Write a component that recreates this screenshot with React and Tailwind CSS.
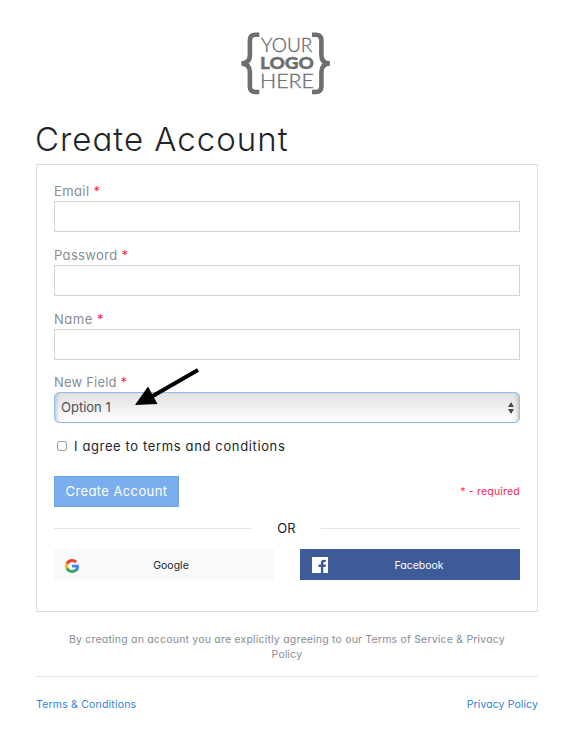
import React from 'react';

function Logo() {
  return (
    <svg className="mr-[2px] block h-[66px] w-[92px]" viewBox="240 31 92 66" fill="none">
      <g stroke="#6d6e71" strokeWidth="4.6">
        <path d="M259.3 34.7H255.5Q249.9 34.7 249.9 40.2V55Q249.9 63.2 241.5 63.5Q249.9 63.8 249.9 72V86.500Q249.9 92 255.5 92H259.3" />
        <path d="M312 34.700H315.800Q321.400 34.700 321.400 40.200V55Q321.400 63.200 329.800 63.500Q321.400 63.800 321.400 72V86.500Q321.400 92 315.800 92H312" />
      </g>
      <text fill="#6d6e71" stroke="#6d6e71" strokeWidth="0.35" fontFamily="Lato, sans-serif">
        <tspan x="261" y="52.200" fontSize="19.400" fontWeight="300" textLength="51.500" lengthAdjust="spacingAndGlyphs">YOUR</tspan>
        <tspan x="260" y="69" fontSize="17.800" fontWeight="900" textLength="54" lengthAdjust="spacingAndGlyphs">LOGO</tspan>
        <tspan x="260" y="88" fontSize="20" fontWeight="300" textLength="54" lengthAdjust="spacingAndGlyphs">HERE</tspan>
      </text>
    </svg>
  );
}

function Label({ children, spacing }) {
  return (
    <label className={`block h-[19px] text-[13px] leading-[19px] text-[#868e96] ${spacing}`}>
      {children} <span className="text-[#ff1f4f]">*</span>
    </label>
  );
}

function Field({ label, spacing }) {
  return (
    <div className="mb-[14px]">
      <Label spacing={spacing}>{label}</Label>
      <input className="block h-[31px] w-full border border-[#ced4da] bg-white px-2 outline-none" />
    </div>
  );
}

function GoogleIcon() {
  return (
    <svg className="h-[14px] w-[14px]" viewBox="2 2 44 44">
      <path fill="#EA4335" d="M24 11.500c3.500 0 6.700 1.200 9.200 3.600l6.900-6.900C35.900 4.200 30.400 2 24 2 15.400 2 8 6.900 4.400 14.100l8 6.200C14.300 15.200 18.700 11.500 24 11.500z" />
      <path fill="#4285F4" d="M46 24.500c0-1.600-.2-3.100-.4-4.500H24v9h12.400c-.6 2.900-2.200 5.300-4.700 7l7.700 6C43.900 37.900 46 31.800 46 24.500z" />
      <path fill="#FBBC05" d="M12.400 28.400A13.500 13.500 0 0 1 12.400 20.300l-8-6.200a22 22 0 0 0 0 20.500z" />
      <path fill="#34A853" d="M24 46c6 0 11.100-2 15.400-6l-7.700-6c-2.100 1.400-4.600 2.500-7.700 2.500-5.300 0-9.700-3.500-11.600-8.100l-8 6.200C8 41.500 15.400 46 24 46z" />
    </svg>
  );
}

function FacebookIcon() {
  return (
    <svg className="h-4 w-4" viewBox="0 0 16 16">
      <path fill="#fff" d="M0 0h16v16h-4.700V9.900h2.200l.3-2.300h-2.500V6.100c0-.7.3-1.100 1.200-1.100h1.400V2.900l-2-.1C10 2.800 8.900 4 8.900 5.800v1.800H6.500v2.300h2.400V16H0z" />
    </svg>
  );
}

export default function App() {
  return (
    <div className="flex h-[736px] w-[566px] flex-col overflow-hidden bg-white pl-9 pr-7 font-['Inter','Open_Sans',sans-serif] text-[#212529] [font-feature-settings:'cv11'_1]">
      <div className="flex h-[115px] shrink-0 justify-center pt-[31px]">
        <Logo />
      </div>
      <h1 className="-ml-px h-[49px] shrink-0 text-[33px] leading-[49px] font-[350] tracking-[1px] whitespace-nowrap">Create Account</h1>

      <div className="h-[448px] shrink-0 border border-[#dcdfe1] px-[17px] pt-[17px]">
        <Field label="Email" spacing="tracking-[0.4px]" />
        <Field label="Password" spacing="tracking-[0.35px]" />
        <Field label="Name" spacing="tracking-[0.5px]" />
        <div className="-mt-px">
          <Label spacing="tracking-[0.2px]">New Field</Label>
          <div className="relative flex h-[31px] items-center justify-between rounded-[5px] border border-[#8fbfec] bg-linear-to-b from-[#e2e2e2] to-white pl-[6px] pr-[5px] shadow-[inset_4px_0_4px_-3px_#b8b8b8,inset_-4px_0_4px_-3px_#b8b8b8]">
            <span className="text-[13px] tracking-[0px] text-[#495057]">Option 1</span>
            <svg className="h-3 w-[6px]" viewBox="0 0 6 12" fill="#444b51">
              <path d="M3 0l3 5H0zM3 12L0 7h6z" />
            </svg>
            <svg className="pointer-events-none absolute left-[78px] top-[-27px] h-[44px] w-[70px]" viewBox="133 366 70 44">
              <path d="M198 370L151 397" stroke="#000" strokeWidth="4" />
              <path d="M135 405L148 386.500L157.500 404z" fill="#000" />
            </svg>
          </div>
        </div>

        <label className="mt-[13px] flex h-5 items-center pl-[3px]">
          <span className="h-[10px] w-[10px] rounded-[2px] border border-[#a3a3a3] bg-white" />
          <span className="ml-[7px] whitespace-nowrap text-[13px] leading-5 tracking-[0.63px]">I agree to terms and conditions</span>
        </label>

        <div className="mt-[20px] flex h-[31px] items-center justify-between">
          <button className="h-[31px] w-[125px] border border-[#6ea4e0] bg-[#7aaeee] text-[13px] tracking-[0.4px] whitespace-nowrap text-white">Create Account</button>
          <span className="text-[10.5px] tracking-[0.2px] text-[#ff1f4f]">* - required</span>
        </div>

        <div className="mt-[11px] flex h-5 items-center">
          <div className="h-px w-[198px] bg-[#e3e5e7]" />
          <span className="flex-1 text-center text-[13px] leading-5">OR</span>
          <div className="h-px w-[199px] bg-[#e3e5e7]" />
        </div>

        <div className="mt-[11px] flex justify-between text-[10.5px]">
          <button className="flex h-[31px] w-[220px] items-center bg-[#f8f9fb] pl-[11px] pr-[11px]">
            <span className="mt-[3px] w-[14px]"><GoogleIcon /></span>
            <span className="flex-1 pt-[2px] text-center">Google</span>
          </button>
          <button className="flex h-[31px] w-[220px] items-center bg-[#3d5b98] pl-3 text-white">
            <FacebookIcon />
            <span className="flex-1 pt-[2px] pr-[10px] text-center">Facebook</span>
          </button>
        </div>
      </div>

      <p className="mt-5 h-[30px] shrink-0 text-center text-[10.5px] leading-[15px] tracking-[0.2px] whitespace-nowrap text-[#868e96]">
        By creating an account you are explicitly agreeing to our Terms of Service &amp; Privacy<br />Policy
      </p>
      <div className="mt-[14px] h-px shrink-0 bg-[#e1e3e5]" />
      <div className="mt-[20px] flex justify-between text-[10.5px] leading-4 text-[#2e83dc]">
        <a className="tracking-[0.2px]">Terms &amp; Conditions</a>
        <a className="tracking-[0.1px]">Privacy Policy</a>
      </div>
    </div>
  );
}
